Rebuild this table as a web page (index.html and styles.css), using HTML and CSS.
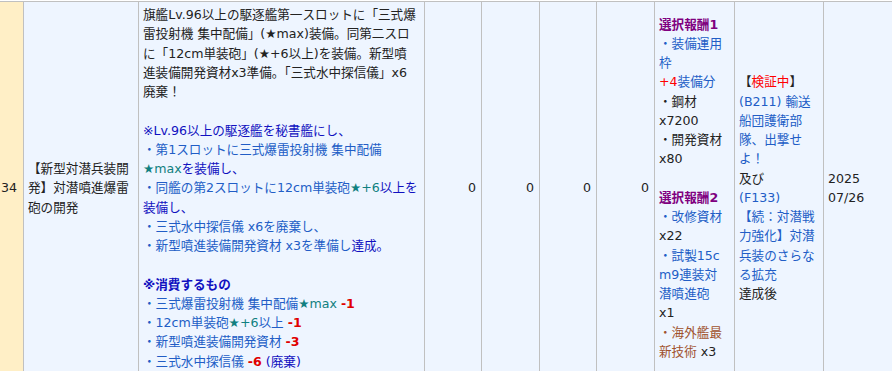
FILE: index.html
```html
<!DOCTYPE html>
<html lang="ja">
<head>
<meta charset="utf-8">
<title>任務一覧</title>
<link rel="stylesheet" href="styles.css">
</head>
<body>
<table class="quests">
  <colgroup>
    <col class="w-no">
    <col class="w-title">
    <col class="w-desc">
    <col class="w-num">
    <col class="w-num2">
    <col class="w-num">
    <col class="w-num2">
    <col class="w-reward">
    <col class="w-cond">
    <col class="w-date">
  </colgroup>
  <tr>
    <td class="no">34</td>
    <td>【新型対潜兵装開発】対潜噴進爆雷砲の開発</td>
    <td class="desc">旗艦Lv.96以上の駆逐艦第一スロットに「三式爆雷投射機 集中配備」(★max)装備。同第二スロに「12cm単装砲」(★+6以上)を装備。新型噴進装備開発資材x3準備。「三式水中探信儀」x6廃棄！<br><br><span class="note">※Lv.96以上の駆逐艦を秘書艦にし、<br><span class="link">・第1スロットに三式爆雷投射機 集中配備</span><span class="star">★max</span>を装備し、<br><span class="link">・同艦の第2スロットに12cm単装砲</span><span class="star">★+6</span>以上を装備し、<br><span class="link">・三式水中探信儀 x6を廃棄し、</span><br><span class="link">・新型噴進装備開発資材 x3を準備し</span>達成。</span><br><br><strong class="note">※消費するもの</strong><br><span class="link">・三式爆雷投射機 集中配備</span><span class="star">★max</span> <strong class="minus">-1</strong><br><span class="link">・12cm単装砲</span><span class="star">★+6</span><span class="link">以上</span> <strong class="minus">-1</strong><br><span class="link">・新型噴進装備開発資材</span> <strong class="minus">-3</strong><br><span class="link">・三式水中探信儀</span> <strong class="minus">-6</strong> <span class="note">(廃棄)</span></td>
    <td class="num">0</td>
    <td class="num">0</td>
    <td class="num">0</td>
    <td class="num">0</td>
    <td class="reward"><strong class="pick">選択報酬1</strong><br><span class="link">・装備運用枠<br><span class="plus">+4</span>装備分</span><br>・鋼材<br>x7200<br>・開発資材<br>x80<br><br><strong class="pick">選択報酬2</strong><br><span class="link">・改修資材</span><br>x22<br><span class="link">・試製15cm9連装対潜噴進砲</span><br>x1<br><span class="tech">・海外艦最新技術</span> <span class="qty">x3</span></td>
    <td>【<span class="verify">検証中</span>】<br><span class="link">(B211) 輸送船団護衛部隊、出撃せよ！</span><br>及び<br><span class="link">(F133) 【続：対潜戦力強化】対潜兵装のさらなる拡充</span><br>達成後</td>
    <td>2025<br>07/26</td>
  </tr>
</table>
</body>
</html>
```
FILE: styles.css
```css
html, body {
  margin: 0;
  padding: 0;
  overflow: hidden;
  background: #ffffff;
}

body {
  font-family: "DejaVu Sans", "Noto Sans CJK JP", sans-serif;
  font-size: 12.6px;
  line-height: 19.25px;
  color: #222222;
}

.quests {
  border-collapse: separate;
  border-spacing: 0;
  table-layout: fixed;
  width: 924px;
  margin-top: 1px;
}

.w-no { width: 24px; }
.w-title { width: 115px; }
.w-desc { width: 286px; }
.w-num { width: 57px; }
.w-num2 { width: 58px; }
.w-reward { width: 80px; }
.w-cond { width: 89px; }
.w-date { width: 100px; }

.quests td {
  background: #eef5ff;
  border-top: 1px solid #c0c0c0;
  border-right: 1px solid #c0c0c0;
  padding: 3px 4px;
  vertical-align: middle;
}

.quests td.no {
  background: #ffefc6;
  text-align: right;
  white-space: nowrap;
  padding-left: 0;
  padding-right: 6px;
}

.quests td.desc {
  padding-right: 6px;
}

.quests td.num {
  text-align: right;
  padding-right: 5px;
}

.quests td.reward {
  word-break: break-all;
  padding-right: 6px;
}

.qty { white-space: nowrap; }

.note { color: #1010c0; }
.link { color: #215dc6; }
.star { color: #108080; }
.minus { color: #e00000; }
.plus { color: #ff0000; }
.pick { color: #800080; }
.tech { color: #a0522d; }
.verify { color: #ff0000; }
```
